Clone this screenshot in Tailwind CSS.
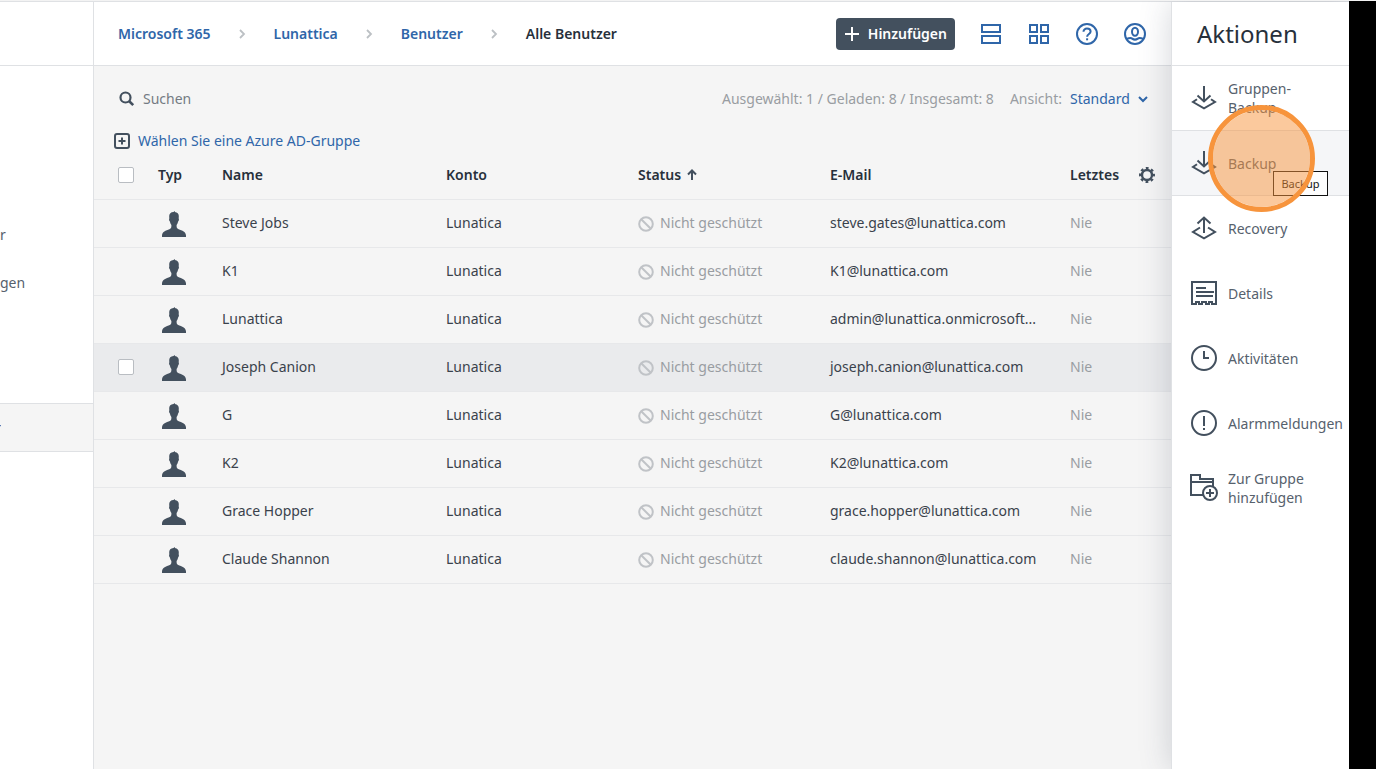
<!DOCTYPE html>
<html lang="de">
<head>
<meta charset="utf-8">
<title>Alle Benutzer</title>
<script src="https://cdn.jsdelivr.net/npm/@tailwindcss/browser@4"></script>
</head>
<body class="flex h-screen flex-col overflow-hidden border-t border-[#f3f3f3] bg-white font-['Noto_Sans',sans-serif] text-sm text-[#3a424c]">

<svg class="hidden" aria-hidden="true">
  <symbol id="person" viewBox="0 -2 24 28"><path fill="#43505e" d="M11.400.9 13 0l-.1.9c2.500.3 4 2 3.900 4.300l-.1 2.300c.5.6.2 2.300-.6 3-.3 1.600-.8 2.700-1.500 3.500 0 1.700.1 2.600.6 3.200C17.200 19.200 24 19.400 24 24.600V26H0v-1.400c0-5.200 6.800-5.400 8.800-7.400.5-.6.6-1.500.6-3.200-.7-.8-1.200-1.900-1.500-3.500-.8-.7-1.100-2.400-.6-3l-.1-2.300C7.100 2.900 8.800 1 11.400.9Z"/></symbol>
  <symbol id="blocked" viewBox="0 -2 16 18"><g fill="none" stroke="#c0c3c7" stroke-width="2"><circle cx="8" cy="8" r="6.800"/><path d="m3.200 3.200 9.600 9.600"/></g></symbol>
  <symbol id="crumb" viewBox="0 0 8 10"><path d="m2 1 4 4-4 4" fill="none" stroke="#bcc0c4" stroke-width="1.800"/></symbol>
</svg>

<div class="flex min-h-0 flex-1 border-t border-[#dfe1e4]">

  <aside class="flex w-[94px] shrink-0 flex-col border-r border-[#dfe1e4] text-[#56616d]">
    <div class="h-16 shrink-0 border-b border-[#dfe1e4]"></div>
    <nav class="flex flex-col pt-[145px]">
      <a href="#" class="flex h-12 items-center">r</a>
      <a href="#" class="flex h-12 items-center">gen</a>
      <div class="h-24"></div>
      <a href="#" class="flex h-[49px] items-center border-y border-[#dfe1e4] bg-[#f5f5f5]"><span class="flex w-px justify-end overflow-hidden">r</span></a>
    </nav>
  </aside>

  <main class="flex min-w-0 flex-1 flex-col bg-[#f5f5f5]">
    <header class="flex h-16 shrink-0 items-center justify-between border-b border-[#dfe1e4] bg-white px-6">
      <nav class="flex items-center font-semibold text-[#2f66a9]">
        <a href="#">Microsoft 365</a>
        <span class="flex w-[63px] justify-center"><svg class="h-2.5 w-2"><use href="#crumb"/></svg></span>
        <a href="#">Lunattica</a>
        <span class="flex w-[63px] justify-center"><svg class="h-2.5 w-2"><use href="#crumb"/></svg></span>
        <a href="#">Benutzer</a>
        <span class="flex w-[63px] justify-center"><svg class="h-2.5 w-2"><use href="#crumb"/></svg></span>
        <span class="text-[#27303b]">Alle Benutzer</span>
      </nav>
      <div class="flex items-center gap-6 text-[#2f66a9]">
        <button class="flex h-8 items-center gap-2 rounded bg-[#43505e] px-2 font-semibold text-white">
          <svg class="size-4" viewBox="0 0 16 16" fill="none" stroke="currentColor" stroke-width="2"><path d="M8 1v14M1 8h14"/></svg>
          Hinzufügen
        </button>
        <button aria-label="Listenansicht"><svg class="size-6" viewBox="0 0 24 24" fill="none" stroke="currentColor" stroke-width="2"><path d="M3 3h18v7H3zM3 14h18v7H3z"/></svg></button>
        <button aria-label="Kachelansicht"><svg class="size-6" viewBox="0 0 24 24" fill="none" stroke="currentColor" stroke-width="2"><path d="M3 3h7v7H3zM14 3h7v7h-7zM3 14h7v7H3zM14 14h7v7h-7z"/></svg></button>
        <button aria-label="Hilfe"><svg class="size-6" viewBox="0 0 24 24" fill="none" stroke="currentColor" stroke-width="2"><circle cx="12" cy="12" r="10"/><path d="M8.500 9.800C8.500 7.800 10 6.600 12 6.600s3.600 1.200 3.600 3c0 2.500-3.500 2.400-3.500 5.200"/><path d="M11.100 17.300h2"/></svg></button>
        <button aria-label="Konto"><svg class="size-6" viewBox="0 0 24 24" fill="none" stroke="currentColor" stroke-width="2"><circle cx="12" cy="12" r="10"/><ellipse cx="12" cy="9.700" rx="3" ry="4"/><path d="M3.500 17c3-1.200 4.500-1.300 5.700-.4 1.800 1.300 3.800 1.300 5.600 0 1.200-.9 2.700-.8 5.700.4"/></svg></button>
      </div>
    </header>

    <div class="flex h-[65px] items-center justify-between pr-[23px] pl-[25px]">
      <label class="flex items-center gap-2">
        <svg class="size-4" viewBox="0 0 16 16" fill="none" stroke="#43505e"><circle cx="6.500" cy="6.500" r="5" stroke-width="2.200"/><path d="m10 10 4.200 4.200" stroke-width="2.600"/></svg>
        <input type="search" aria-label="Suchen" placeholder="Suchen" class="w-60 bg-transparent placeholder:text-[#747b83] focus:outline-none">
      </label>
      <div class="flex items-center text-[#999da2]">
        <span>Ausgewählt: 1 / Geladen: 8 / Insgesamt: 8</span>
        <label for="view" class="ml-4">Ansicht:</label>
        <span class="ml-2 flex items-center text-[#2f66a9]">
          <select id="view" class="appearance-none bg-transparent"><option>Standard</option></select>
          <svg class="ml-2 h-2.5 w-2.5" viewBox="0 0 10 10" fill="none" stroke="currentColor" stroke-width="2"><path d="m1 3 4 4 4-4"/></svg>
        </span>
      </div>
    </div>

    <div class="flex h-5 items-center pl-5">
      <button class="flex items-center gap-2 text-[#2f66a9]">
        <svg class="size-4" viewBox="0 0 16 16" fill="none" stroke="#43505e" stroke-width="2"><rect x="1" y="1" width="14" height="14" rx="2"/><path d="M8 4.500v7M4.500 8h7"/></svg>
        Wählen Sie eine Azure AD-Gruppe
      </button>
    </div>

    <table class="w-full table-fixed border-separate border-spacing-0 text-left [&_td]:h-12 [&_td]:border-b [&_td]:border-[#e7e8ea] [&_td]:pb-px [&_th]:h-[49px] [&_th]:border-b [&_th]:border-[#e7e8ea] [&_th]:font-semibold [&_th]:text-[#27303b]">
      <colgroup><col class="w-16"><col class="w-16"><col class="w-56"><col class="w-48"><col class="w-48"><col class="w-60"><col></colgroup>
      <thead>
        <tr>
          <th class="pl-6"><input type="checkbox" aria-label="Alle auswählen" class="block size-4 appearance-none rounded-xs border border-[#b9bdc2] bg-white"></th>
          <th>Typ</th>
          <th>Name</th>
          <th>Konto</th>
          <th><button class="flex items-center gap-1.5">Status<svg class="h-3 w-2.5" viewBox="0 0 10 12" fill="none" stroke="#43505e" stroke-width="2"><path d="M5 11V1.500M1 5.500l4-4 4 4"/></svg></button></th>
          <th>E-Mail</th>
          <th class="pr-4"><div class="flex items-center justify-between">Letztes<button aria-label="Spalten"><svg class="block size-4" viewBox="0 0 16 16" fill="none" stroke="#43505e"><circle cx="8" cy="8" r="5" stroke-width="2.400"/><circle cx="8" cy="8" r="6.900" stroke-width="2.200" stroke-dasharray="2.800 2.619" stroke-dashoffset="1.400"/></svg></button></div></th>
        </tr>
      </thead>
      <tbody>
        <tr><td></td><td><svg class="ml-1 h-7 w-6"><use href="#person"/></svg></td><td>Steve Jobs</td><td>Lunatica</td><td><span class="flex items-center gap-1.5 text-[#999da2]"><svg class="h-[18px] w-4"><use href="#blocked"/></svg>Nicht geschützt</span></td><td>steve.gates@lunattica.com</td><td class="text-[#999da2]">Nie</td></tr>
        <tr><td></td><td><svg class="ml-1 h-7 w-6"><use href="#person"/></svg></td><td>K1</td><td>Lunatica</td><td><span class="flex items-center gap-1.5 text-[#999da2]"><svg class="h-[18px] w-4"><use href="#blocked"/></svg>Nicht geschützt</span></td><td>K1@lunattica.com</td><td class="text-[#999da2]">Nie</td></tr>
        <tr><td></td><td><svg class="ml-1 h-7 w-6"><use href="#person"/></svg></td><td>Lunattica</td><td>Lunatica</td><td><span class="flex items-center gap-1.5 text-[#999da2]"><svg class="h-[18px] w-4"><use href="#blocked"/></svg>Nicht geschützt</span></td><td>admin@lunattica.onmicrosoft...</td><td class="text-[#999da2]">Nie</td></tr>
        <tr class="bg-[#eaebed]"><td class="pl-6"><input type="checkbox" aria-label="Joseph Canion auswählen" class="block size-4 appearance-none rounded-xs border border-[#b9bdc2] bg-white"></td><td><svg class="ml-1 h-7 w-6"><use href="#person"/></svg></td><td>Joseph Canion</td><td>Lunatica</td><td><span class="flex items-center gap-1.5 text-[#999da2]"><svg class="h-[18px] w-4"><use href="#blocked"/></svg>Nicht geschützt</span></td><td>joseph.canion@lunattica.com</td><td class="text-[#999da2]">Nie</td></tr>
        <tr><td></td><td><svg class="ml-1 h-7 w-6"><use href="#person"/></svg></td><td>G</td><td>Lunatica</td><td><span class="flex items-center gap-1.5 text-[#999da2]"><svg class="h-[18px] w-4"><use href="#blocked"/></svg>Nicht geschützt</span></td><td>G@lunattica.com</td><td class="text-[#999da2]">Nie</td></tr>
        <tr><td></td><td><svg class="ml-1 h-7 w-6"><use href="#person"/></svg></td><td>K2</td><td>Lunatica</td><td><span class="flex items-center gap-1.5 text-[#999da2]"><svg class="h-[18px] w-4"><use href="#blocked"/></svg>Nicht geschützt</span></td><td>K2@lunattica.com</td><td class="text-[#999da2]">Nie</td></tr>
        <tr><td></td><td><svg class="ml-1 h-7 w-6"><use href="#person"/></svg></td><td>Grace Hopper</td><td>Lunatica</td><td><span class="flex items-center gap-1.5 text-[#999da2]"><svg class="h-[18px] w-4"><use href="#blocked"/></svg>Nicht geschützt</span></td><td>grace.hopper@lunattica.com</td><td class="text-[#999da2]">Nie</td></tr>
        <tr><td></td><td><svg class="ml-1 h-7 w-6"><use href="#person"/></svg></td><td>Claude Shannon</td><td>Lunatica</td><td><span class="flex items-center gap-1.5 text-[#999da2]"><svg class="h-[18px] w-4"><use href="#blocked"/></svg>Nicht geschützt</span></td><td>claude.shannon@lunattica.com</td><td class="text-[#999da2]">Nie</td></tr>
      </tbody>
    </table>
  </main>

  <aside class="z-10 flex w-[178px] shrink-0 flex-col border-l border-[#dfe1e4] bg-white text-[#56616d] shadow-[0_0_30px_rgba(60,70,90,0.22)]">
    <h2 class="flex h-16 shrink-0 items-center border-b border-[#dfe1e4] pl-[25px] text-2xl text-[#27303b]">Aktionen</h2>
    <button class="flex h-[65px] shrink-0 items-center gap-2.5 border-b border-[#dfe1e4] pl-[18px] text-left leading-[19px]">
      <svg class="size-7 shrink-0" viewBox="0 0 28 28" fill="none" stroke="#43505e" stroke-width="2"><path d="M14 2v15.500M7.500 11.500l6.500 6 6.500-6M7 15.200 3 18l11 6.300L25 18l-4-2.800"/></svg>
      <span>Gruppen-<br>Backup</span>
    </button>
    <div class="relative shrink-0">
      <button class="flex h-[65px] w-full items-center gap-2.5 border-b border-[#dfe1e4] bg-[#f5f6f8] pl-[18px] text-left leading-[19px]">
        <svg class="size-7 shrink-0" viewBox="0 0 28 28" fill="none" stroke="#43505e" stroke-width="2"><path d="M14 2v15.500M7.500 11.500l6.500 6 6.500-6M7 15.200 3 18l11 6.300L25 18l-4-2.800"/></svg>
        <span>Backup</span>
      </button>
      <div role="tooltip" class="absolute top-10 left-[101px] flex h-[25px] w-[55px] items-center justify-center border border-[#111] bg-[#fdfdfd] text-[11px] text-[#111]">Backup</div>
      <div class="absolute -top-[26px] left-9 size-[107px] rounded-full border-5 border-[#f7943c] bg-[#f7943c]/50 bg-clip-padding"></div>
    </div>
    <button class="flex h-[65px] shrink-0 items-center gap-2.5 pl-[18px] text-left leading-[19px]">
      <svg class="size-7 shrink-0" viewBox="0 0 28 28" fill="none" stroke="#43505e" stroke-width="2"><path d="M14 18V2.500M7.500 8.500l6.500-6 6.500 6M10 12.500 3 17l11 6.300L25 17l-7-4.500"/></svg>
      <span>Recovery</span>
    </button>
    <button class="flex h-[65px] shrink-0 items-center gap-2.5 pl-[18px] text-left leading-[19px]">
      <svg class="size-7 shrink-0" viewBox="0 0 28 28" fill="none" stroke="#43505e" stroke-width="2"><path d="M2 2h24v22h-4v-2h-3v2h-3v-2h-4v2H9v-2H6v2H2zM6 8h10M6 12h18M6 16h17"/></svg>
      <span>Details</span>
    </button>
    <button class="flex h-[65px] shrink-0 items-center gap-2.5 pl-[18px] text-left leading-[19px]">
      <svg class="size-7 shrink-0" viewBox="0 0 28 28" fill="none" stroke="#43505e" stroke-width="2"><circle cx="14" cy="13" r="12"/><path d="M14 6v7h5"/></svg>
      <span>Aktivitäten</span>
    </button>
    <button class="flex h-[65px] shrink-0 items-center gap-2.5 pl-[18px] text-left leading-[19px]">
      <svg class="size-7 shrink-0" viewBox="0 0 28 28" fill="none" stroke="#43505e" stroke-width="2"><circle cx="14" cy="13" r="12"/><path d="M14 6v10M14 18v2"/></svg>
      <span>Alarmmeldungen</span>
    </button>
    <button class="flex h-16 shrink-0 items-center gap-2.5 pl-[18px] text-left leading-[19px]">
      <svg class="size-7 shrink-0" viewBox="0 0 28 28" fill="none" stroke="#43505e" stroke-width="2"><path d="M13 21H1V1h9v4h13v8M1 8h22"/><circle cx="20" cy="19" r="7"/><path d="M20 15v8M16 19h8"/></svg>
      <span>Zur Gruppe<br>hinzufügen</span>
    </button>
  </aside>
  <div class="relative z-20 -mt-0.5 w-[27px] shrink-0 bg-black"></div>
</div>
</body>
</html>
